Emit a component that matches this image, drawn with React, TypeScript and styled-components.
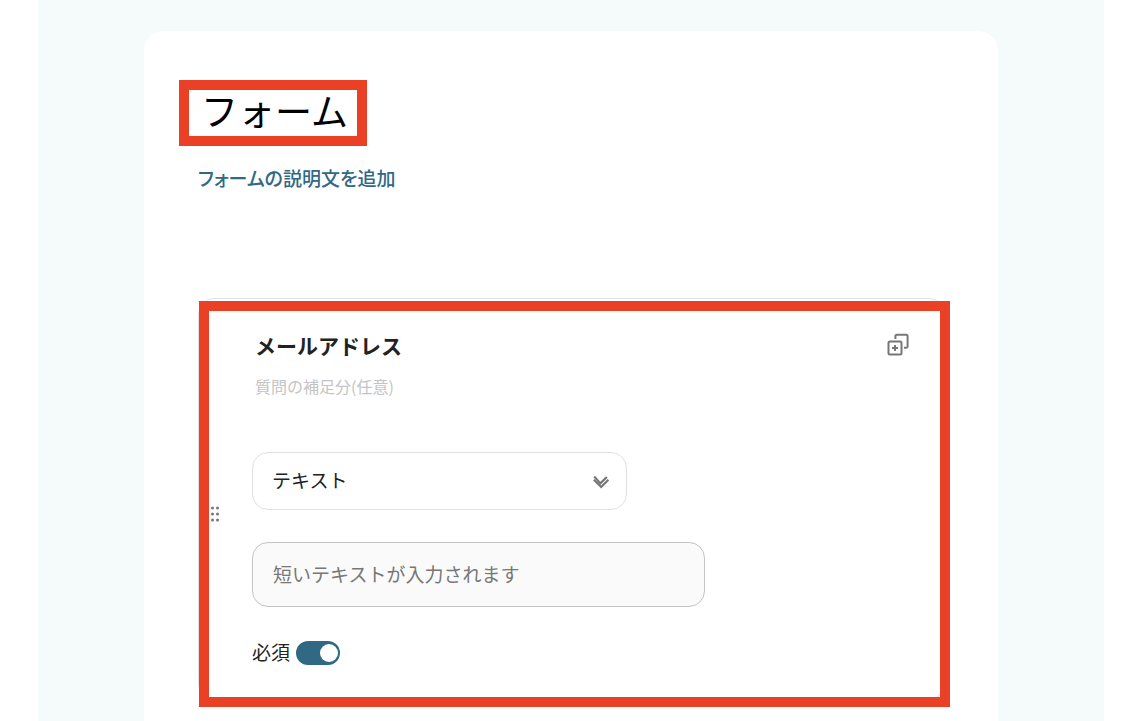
import React from "react";
import styled, { createGlobalStyle } from "styled-components";

const teal = "#2f6983";
const marker = "#ea4126";

const GlobalStyle = createGlobalStyle`
  *, *::before, *::after { box-sizing: border-box; }
  body {
    margin: 0;
    background: #fff;
    color: #222;
    font-family: "Noto Sans CJK JP", "Noto Sans", sans-serif;
  }
  input, select, button { font-family: inherit; }
`;

const Page = styled.main`
  display: flex;
  flex-direction: column;
  min-height: 100vh;
  margin: 0 39px 0 38px;
  padding: 31px 106px 0;
  background: #f5fbfb;
`;

const FormCard = styled.form`
  flex: 1;
  padding: 49px 53px 20px 54px;
  border-radius: 20px 20px 0 0;
  background: #fff;
`;

const TitleFrame = styled.div`
  width: 188px;
  height: 66px;
  margin-left: -19px;
  border: 10px solid ${marker};
`;

const PlainInput = styled.input`
  display: block;
  width: 100%;
  padding: 0;
  border: 0;
  outline: 0;
  background: transparent;
`;

const TitleInput = styled(PlainInput)`
  height: 40px;
  padding-left: 12px;
  font-size: 37px;
  line-height: 40px;
  color: #000;
`;

const AddDescription = styled.button`
  display: block;
  margin: 18px 0 106px;
  padding: 0;
  border: 0;
  background: none;
  color: ${teal};
  font-size: 19px;
  font-weight: 500;
  font-feature-settings: "palt";
  line-height: 28px;
`;

const QuestionCard = styled.section`
  position: relative;
  display: flex;
  height: 402px;
  padding: 30px 32px 33px 11px;
  border: 1px solid #dfe1e6;
  border-radius: 16px;
`;

const QuestionMarker = styled.div`
  position: absolute;
  inset: 2px -6px -8px 0;
  border: 10px solid ${marker};
  pointer-events: none;
`;

const IconButton = styled.button`
  display: flex;
  padding: 0;
  border: 0;
  background: none;
  color: #777;
`;

const DragHandle = styled(IconButton)`
  align-self: center;
  margin: 32px 32px 0 0;
`;

const QuestionBody = styled.div`
  flex: 1;
  min-width: 0;
`;

const QuestionHeader = styled.div`
  display: flex;
  align-items: center;
  height: 32px;
  padding-left: 3px;
`;

const QuestionTitle = styled(PlainInput)`
  height: 32px;
  font-size: 21px;
  font-weight: 700;
  color: #222;
`;

const QuestionNote = styled(PlainInput)`
  height: 24px;
  margin: 13px 0 54px;
  padding-left: 3px;
  font-size: 16px;
  &::placeholder { color: #c4c4c4; opacity: 1; }
`;

const SelectBox = styled.div`
  display: grid;
  align-items: center;
  width: 375px;
  max-width: 100%;
  height: 58px;
  & > * { grid-area: 1 / 1; }
`;

const TypeSelect = styled.select`
  width: 100%;
  height: 58px;
  padding: 0 48px 4px 19px;
  border: 1px solid #dfe1e8;
  border-radius: 16px;
  background: #fff;
  color: #222;
  font-size: 19px;
  appearance: none;
`;

const SelectArrow = styled.svg`
  justify-self: end;
  margin: 2px 17px 0 0;
  pointer-events: none;
`;

const AnswerInput = styled.input`
  display: block;
  width: 453px;
  max-width: 100%;
  height: 65px;
  margin: 32px 0;
  padding: 0 20px 2px;
  border: 1px solid #c4c4c4;
  border-radius: 16px;
  background: #fafafa;
  font-size: 19px;
  &::placeholder { color: #777; opacity: 1; }
`;

const RequiredLabel = styled.label`
  display: inline-flex;
  align-items: center;
  gap: 6px;
  height: 28px;
  font-size: 19px;
  line-height: 28px;
`;

const RequiredText = styled.span`
  padding-bottom: 2px;
`;

const Toggle = styled.input`
  width: 44px;
  height: 24px;
  margin: 0;
  padding: 3px 2px;
  border-radius: 12px;
  background: #bbb;
  appearance: none;
  &::before {
    content: "";
    display: block;
    width: 18px;
    height: 18px;
    border-radius: 50%;
    background: #fff;
  }
  &:checked { background: ${teal}; }
  &:checked::before { margin-left: auto; }
`;

export default function App() {
  return (
    <>
      <GlobalStyle />
      <Page>
        <FormCard>
          <TitleFrame>
            <TitleInput aria-label="フォームのタイトル" defaultValue="フォーム" />
          </TitleFrame>
          <AddDescription type="button">フォームの説明文を追加</AddDescription>
          <QuestionCard>
            <DragHandle type="button" aria-label="並べ替え">
              <svg width="10" height="18" viewBox="0 0 10 18" fill="currentColor">
                {[3, 9, 15].map((y) => (
                  <React.Fragment key={y}>
                    <circle cx="2.5" cy={y} r="1.5" />
                    <circle cx="7.5" cy={y} r="1.5" />
                  </React.Fragment>
                ))}
              </svg>
            </DragHandle>
            <QuestionBody>
              <QuestionHeader>
                <QuestionTitle aria-label="質問" defaultValue="メールアドレス" />
                <IconButton type="button" aria-label="質問を複製">
                  <svg width="26" height="26" viewBox="0 0 26 26" fill="none" stroke="currentColor" strokeWidth="2">
                    <rect x="2.5" y="9.5" width="13" height="13" rx="1.5" />
                    <path d="M9.4 7V4.3a1.5 1.5 0 0 1 1.5-1.5h9.2a1.5 1.5 0 0 1 1.5 1.5v10a1.5 1.5 0 0 1-1.5 1.5h-2.2" />
                    <path d="M9 13v6M6 16h6" />
                  </svg>
                </IconButton>
              </QuestionHeader>
              <QuestionNote aria-label="質問の補足" placeholder="質問の補足分(任意)" />
              <SelectBox>
                <TypeSelect aria-label="回答の種類" defaultValue="text">
                  <option value="text">テキスト</option>
                </TypeSelect>
                <SelectArrow width="18" height="16" viewBox="0 0 18 16" fill="none" stroke="#777" strokeWidth="2.2">
                  <path d="M2.2 2.6 8.4 9.4 14.8 3" />
                  <path d="M1.8 5.8 9.2 13 16.4 5.8" />
                </SelectArrow>
              </SelectBox>
              <AnswerInput aria-label="回答" placeholder="短いテキストが入力されます" readOnly />
              <RequiredLabel>
                <RequiredText>必須</RequiredText>
                <Toggle type="checkbox" role="switch" defaultChecked />
              </RequiredLabel>
            </QuestionBody>
            <QuestionMarker />
          </QuestionCard>
        </FormCard>
      </Page>
    </>
  );
}
